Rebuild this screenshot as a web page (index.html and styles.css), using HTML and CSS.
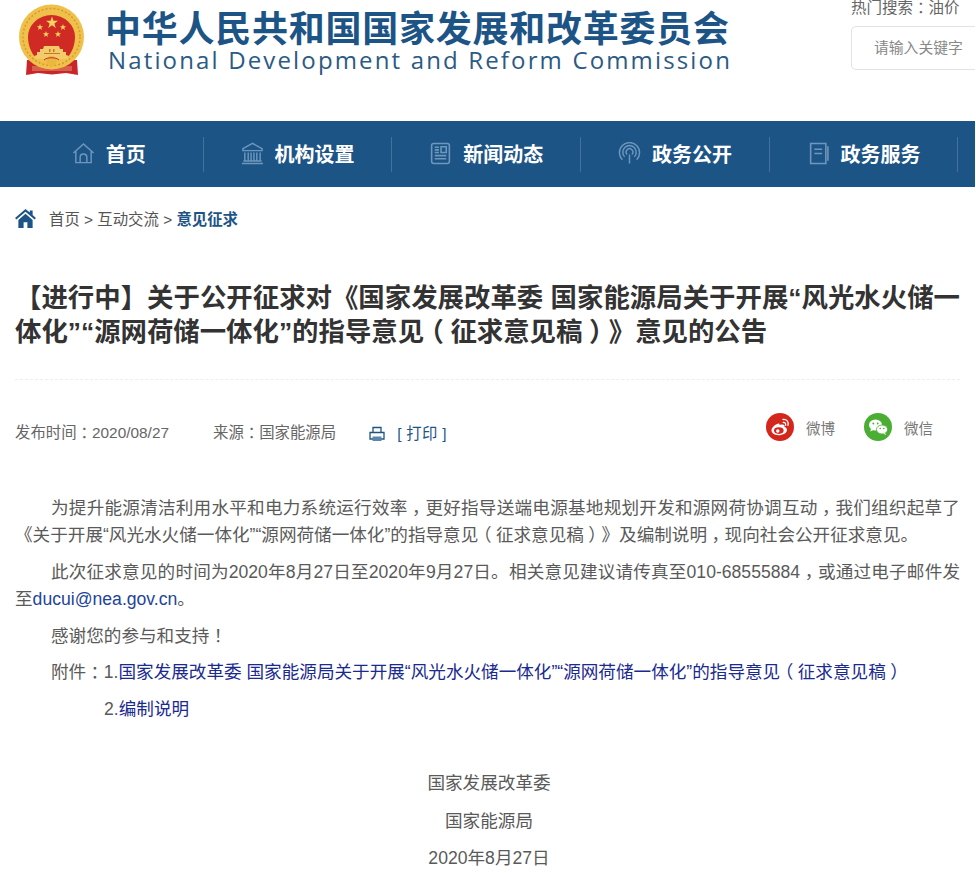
FILE: index.html
```html
<!DOCTYPE html>
<html lang="zh-CN">
<head>
<meta charset="utf-8">
<title>关于公开征求意见的公告</title>
<link rel="stylesheet" href="styles.css">
</head>
<body>
<div class="page">
  <header class="header">
    <svg class="emblem" viewBox="18 4 68 74" aria-hidden="true">
      <path d="M27 60h50l1 15-12-2-14 1.500-14-1.500-12 2z" fill="#c8262a"/>
      <path d="M32 66h40v5H32z" fill="#d8604a"/>
      <circle cx="51.500" cy="37" r="32.500" fill="#efc04a"/>
      <circle cx="51.500" cy="37" r="28.500" fill="none" stroke="#d99a2b" stroke-width="1.500" stroke-dasharray="2 2"/>
      <path d="M28 37a23.500 22 0 0 1 47 0c0 8-3 15-7 20H35c-4-5-7-12-7-20z" fill="#cf2a24"/>
      <path d="M52 16.500l1.500 4.300h4.500l-3.600 2.700 1.300 4.400-3.700-2.600-3.700 2.600 1.300-4.400-3.600-2.700h4.500z" fill="#f4d35e"/>
      <path d="M40 24l.8 2.200 2.300.1-1.800 1.400.6 2.200-1.900-1.300-1.900 1.300.6-2.200-1.800-1.400 2.300-.1zM46 31l.8 2.200 2.300.1-1.800 1.400.6 2.200-1.900-1.300-1.900 1.300.6-2.200-1.800-1.400 2.300-.1zM58 31l.8 2.200 2.300.1-1.800 1.400.6 2.200-1.900-1.300-1.900 1.300.6-2.200-1.800-1.400 2.300-.1zM63 24l.8 2.200 2.300.1-1.800 1.400.6 2.200-1.900-1.300-1.900 1.300.6-2.200-1.800-1.400 2.300-.1z" fill="#f4d35e"/>
      <path d="M44 46h15l1 3h3v3h3v3l3 1-2 3H36l-2-3 3-1v-3h3v-3h3z" fill="#f2cb6a"/>
      <path d="M49 49h1.500v3H49zM53 49h1.500v3H53zM44 53h16v1H44z" fill="#c9762a"/>
      <circle cx="51.500" cy="61" r="5" fill="#eab83f"/>
      <path d="M44 60c3-3 12-3 15 0" fill="none" stroke="#c9262a" stroke-width="1"/>
    </svg>
    <div class="brand">
      <div class="brand-cn">中华人民共和国国家发展和改革委员会</div>
      <div class="brand-en">National Development and Reform Commission</div>
    </div>
    <div class="search">
      <div class="hot">热门搜索<span class="cc">：</span>油价</div>
      <div class="search-box">请输入关键字</div>
    </div>
  </header>

  <nav class="nav">
    <a class="nav-item">
      <svg class="nav-icon" viewBox="0 0 24 24"><path d="M1.500 11.500 12 2l10.500 9.500M4 10v11.500h16V10M8.500 21.500V16a3.500 3.500 0 0 1 7 0v5.500"/></svg>
      <span>首页</span>
    </a>
    <a class="nav-item">
      <svg class="nav-icon" viewBox="0 0 24 24"><path d="M12 1.500 2 7v2h20V7zM4 11v8M7.500 11v8M10.500 11v8M13.500 11v8M16.500 11v8M20 11v8M2.500 19.800h19M1 22.500h22"/></svg>
      <span>机构设置</span>
    </a>
    <a class="nav-item">
      <svg class="nav-icon" viewBox="0 0 20 22"><rect x="1.500" y="1.500" width="17" height="19" rx="2"/><path d="M4.500 5h4M4.500 7.500h4M4.500 10h4M10.500 4.500h5v5.500h-5zM4.500 13h11M4.500 16h11"/></svg>
      <span>新闻动态</span>
    </a>
    <a class="nav-item">
      <svg class="nav-icon" viewBox="0 0 24 24"><path d="M12 13v9.500M4.500 18.500a10.500 10.500 0 1 1 15 0M7 15.500a7 7 0 1 1 10 0M9.500 13a3.500 3.500 0 1 1 5 0"/></svg>
      <span>政务公开</span>
    </a>
    <a class="nav-item">
      <svg class="nav-icon" viewBox="0 0 20 22"><path d="M17 1.500H2.500v19H17zM19 4v14"/><path d="M6 7h7.500M6 11h7.500"/></svg>
      <span>政务服务</span>
    </a>
  </nav>

  <main class="content">
    <div class="crumbs">
      <svg class="crumb-home" viewBox="0 0 22 20"><path d="M11 0 0 9.500l1.400 1.600L11 3l9.600 8.100L22 9.500 18.500 6.400V1.500h-3v2.300zM3.500 11.500V20h5.500v-6h4v6h5.500v-8.500L11 5z"/></svg>
      <span class="crumb-links">首页 &gt; 互动交流 &gt; <b>意见征求</b></span>
    </div>

    <h1 class="title">【进行中】关于公开征求对《国家发展改革委 国家能源局关于开展“风光水火储一体化”“源网荷储一体化”的指导意见<span class="cc">（</span>征求意见稿<span class="cc">）</span>》意见的公告</h1>

    <div class="meta">
      <span class="meta-date">发布时间<span class="cc">：</span>2020/08/27</span>
      <span class="meta-source">来源<span class="cc">：</span>国家能源局</span>
      <span class="meta-print">
        <svg class="print-icon" viewBox="0 0 16 16"><path d="M4 6V1.500h8V6" fill="none" stroke="#1d5486" stroke-width="1.300"/><path d="M1 6.500h14V13H1z" fill="none" stroke="#1d5486" stroke-width="1.300"/><path d="M3.500 10.500h9V15h-9z" fill="#5d86ad"/></svg>
        <span class="print-text">[ 打印 ]</span>
      </span>
      <span class="share">
        <span class="share-item">
          <svg class="share-icon" viewBox="0 0 28 28"><circle cx="14" cy="14" r="14" fill="#d3261c"/><path d="M12.500 10.500c-3.500.8-7 4-7 7 0 2.700 3.300 4.700 7 4.700 4.400 0 8.500-2.500 8.500-5.300 0-1.800-1.700-2.500-2.600-2.800.6-1.500.2-2.700-2.600-2.600-1 0-2.300.6-2.300.6s.5-2-1-1.600z" fill="#fff"/><ellipse cx="12.800" cy="17.600" rx="4.800" ry="3.300" fill="#d3261c"/><circle cx="11.800" cy="18" r="1.700" fill="#fff"/><path d="M17 6.500c3.500-.6 6 2.500 5 5.800M17.300 9.500c1.700-.3 2.700 1 2.300 2.600" fill="none" stroke="#fff" stroke-width="1.300" stroke-linecap="round"/></svg>
          <span>微博</span>
        </span>
        <span class="share-item">
          <svg class="share-icon" viewBox="0 0 28 28"><circle cx="14" cy="14" r="14" fill="#4bae34"/><ellipse cx="11.500" cy="12" rx="6.500" ry="5.500" fill="#fff"/><path d="m7 16-.8 2.600 3.200-1.700z" fill="#fff"/><circle cx="9.300" cy="10.500" r=".9" fill="#4bae34"/><circle cx="13.700" cy="10.500" r=".9" fill="#4bae34"/><ellipse cx="18" cy="16.500" rx="5.500" ry="4.500" fill="#fff" stroke="#4bae34" stroke-width=".8"/><path d="m21 20 1.300 2-3-1.300z" fill="#fff"/><circle cx="16.200" cy="15.500" r=".8" fill="#4bae34"/><circle cx="19.800" cy="15.500" r=".8" fill="#4bae34"/></svg>
          <span>微信</span>
        </span>
      </span>
    </div>

    <article class="body">
      <p class="para">为提升能源清洁利用水平和电力系统运行效率<span class="cc">，</span>更好指导送端电源基地规划开发和源网荷协调互动<span class="cc">，</span>我们组织起草了《关于开展“风光水火储一体化”“源网荷储一体化”的指导意见<span class="cc">（</span>征求意见稿<span class="cc">）</span>》及编制说明<span class="cc">，</span>现向社会公开征求意见。</p>
      <p class="para">此次征求意见的时间为2020年8月27日至2020年9月27日。相关意见建议请传真至010-68555884<span class="cc">，</span>或通过电子邮件发至<a class="plain">ducui@nea.gov.cn</a>。</p>
      <p class="para">感谢您的参与和支持<span class="cc">！</span></p>
      <p class="para">附件<span class="cc">：</span>1.<a class="link">国家发展改革委 国家能源局关于开展“风光水火储一体化”“源网荷储一体化”的指导意见<span class="cc">（</span>征求意见稿<span class="cc">）</span></a></p>
      <p class="para attach2">2.<a class="link">编制说明</a></p>
      <p class="sign first-sign">国家发展改革委</p>
      <p class="sign">国家能源局</p>
      <p class="sign">2020年8月27日</p>
    </article>
  </main>
</div>
</body>
</html>
```

FILE: styles.css
```css
* { box-sizing: border-box; }
html, body { margin: 0; padding: 0; background: #fff; }
body {
  font-family: "Liberation Sans", "Noto Sans CJK SC", sans-serif;
  color: #555;
  text-spacing-trim: space-all;
}
/* Full-width punctuation sits centred in the em box in the original face:
   take the half-width glyph and pad it back out to a full em. */
.cc { font-feature-settings: "halt"; padding: 0 .25em; }

.page { width: 975px; overflow: hidden; }

.header { height: 121px; display: flex; align-items: flex-start; }
.emblem { width: 68px; height: 74px; margin: 4px 0 0 18px; flex: none; }
.brand { margin: 10px 0 0 19px; width: 661px; flex: none; }
.brand-cn {
  font-size: 36px; line-height: 40px; font-weight: 700; color: #1d5486;
  letter-spacing: .75px; white-space: nowrap;
}
.brand-en {
  font-family: "Open Sans", sans-serif;
  font-size: 24px; line-height: 28px; color: #2b5a84;
  letter-spacing: 2.15px; white-space: nowrap; margin-left: 3px; margin-top: -4px;
}
.search { margin-left: 85px; flex: none; width: 160px; font-size: 15.500px; color: #666; }
.hot { line-height: 15px; }
.search-box {
  margin-top: 11px; height: 44px; width: 160px; border: 1px solid #e3e3e3; border-radius: 5px;
  padding-left: 22px; line-height: 42px; font-size: 14.800px; color: #888;
}

.nav { height: 66px; background: #1d5486; display: flex; padding: 16px 0 15px 15px; }
.nav-item {
  flex: none; width: 188.700px; height: 35px; padding: 0 0 2px 0;
  border-right: 1px solid #44729d;
  display: flex; align-items: center; justify-content: center; gap: 11px;
  color: #fff; font-size: 20px; font-weight: 700;
}
.nav-icon {
  width: 23px; height: 23px; fill: none; stroke: #6f97bd; stroke-width: 1.500;
}

.content { padding: 0 15px 0 15px; }
.crumbs { display: flex; align-items: center; height: 20px; margin-top: 21px; font-size: 15.400px; }
.crumb-home { width: 21px; height: 19px; fill: #1d5486; flex: none; }
.crumb-links { margin-left: 13px; color: #555; }
.crumb-links b { color: #1d5486; }

.title {
  margin: 53px 0 0; font-size: 26.400px; line-height: 34px; font-weight: 700; color: #333;
  padding-bottom: 30px; border-bottom: 1px dashed #eee; text-align: justify;
}

.meta { display: flex; align-items: center; margin-top: 37px; height: 28px; font-size: 15.400px; color: #666; }
.meta-source { margin-left: 44px; }
.meta-print { margin-left: 33px; display: flex; align-items: center; gap: 12px; }
.print-icon { width: 16px; height: 16px; margin-top: 5px; }
.print-text { color: #1d5486; letter-spacing: .3px; margin-top: 2px; }
.share { margin-left: auto; margin-right: 27px; display: flex; gap: 29px; margin-top: -8px; }
.share-item { display: flex; align-items: center; gap: 12px; color: #777; font-size: 14.500px; }
.share-icon { width: 28px; height: 28px; }

.body { margin-top: 50px; font-size: 17.600px; line-height: 27px; color: #5a5a5a; }
.para { margin: 0 0 9.800px; text-indent: 36px; text-align: justify; }
.attach2 { text-indent: 0; padding-left: 89px; }
.plain { color: #22449a; }
.link { color: #1a2a8f; }
.sign { margin: 0 0 10.400px; padding-left: 3px; text-align: center; }
.first-sign { margin-top: 47px; }
```
